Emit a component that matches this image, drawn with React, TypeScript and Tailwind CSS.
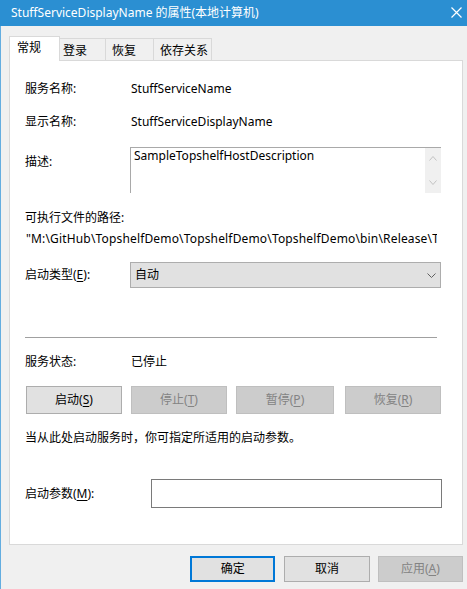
const Key = ({ k }: { k: string }) => <span className="underline underline-offset-2">{k}</span>;

function Chevron({ up = false, color = "#606060", w = 9, h = 5 }: { up?: boolean; color?: string; w?: number; h?: number }) {
  return (
    <svg width={w} height={h} viewBox={`0 0 ${w} ${h}`} fill="none">
      <path
        d={up ? `M0.5 ${h - 0.5} L${w / 2} 0.5 L${w - 0.5} ${h - 0.5}` : `M0.5 0.5 L${w / 2} ${h - 0.5} L${w - 0.5} 0.5`}
        stroke={color}
        strokeWidth="1"
      />
    </svg>
  );
}

function Btn({ children, disabled = false, className = "" }: { children: React.ReactNode; disabled?: boolean; className?: string }) {
  return (
    <div
      className={
        "flex items-center justify-center border leading-4 " +
        (disabled ? "bg-[#cccccc] border-[#bfbfbf] text-[#838383] " : "bg-[#e1e1e1] border-[#adadad] text-black ") +
        className
      }
    >
      {children}
    </div>
  );
}

export default function App() {
  return (
    <div className="w-[467px] h-[589px] bg-[#f0f0f0] flex flex-col overflow-hidden text-[12px] text-black font-['Noto_Sans','Noto_Sans_CJK_SC',sans-serif]">
      {/* title bar */}
      <div className="h-[26px] bg-[#2b8fd2] flex items-center pl-[11px] pr-[5px] text-white shrink-0">
        <span className="flex-1 leading-4">StuffServiceDisplayName 的属性(本地计算机)</span>
        <svg width="11" height="11" viewBox="0 0 11 11" className="mb-[2px]">
          <path d="M0.5 0.5 L10.5 10.5 M10.5 0.5 L0.5 10.5" stroke="#fff" strokeWidth="1.2" />
        </svg>
      </div>

      <div className="flex-1 flex flex-col border-l border-[#63ade0] pl-[8px] pr-[4px] pt-[10px]">
        {/* tabs */}
        <div className="flex items-end h-[24px]">
          <div className="relative z-10 -mb-px h-[25px] w-[51px] bg-white border-t border-l border-r border-[#d9d9d9] pl-[7px] pt-[3px] leading-4">
            常规
          </div>
          <div className="h-[22px] w-[46px] border-t border-r border-[#d9d9d9] pl-[3px] pt-[4px] leading-4">登录</div>
          <div className="h-[22px] w-[48px] border-t border-r border-[#d9d9d9] pl-[6px] pt-[4px] leading-4">恢复</div>
          <div className="h-[22px] w-[58px] border-t border-r border-[#d9d9d9] pl-[6px] pt-[4px] leading-4">依存关系</div>
        </div>

        {/* panel */}
        <div className="h-[485px] bg-white border border-[#d9d9d9] pl-[15px] flex flex-col leading-4">
          <div className="flex mt-[20px]">
            <div className="w-[106px]">服务名称:</div>
            <div>StuffServiceName</div>
          </div>
          <div className="flex mt-[17px]">
            <div className="w-[106px]">显示名称:</div>
            <div>StuffServiceDisplayName</div>
          </div>
          <div className="flex mt-[17px]">
            <div className="w-[105px] pt-[7px]">描述:</div>
            <div className="w-[311px] h-[46px] border-t border-l border-[#a9a9a9] flex">
              <div className="flex-1 pl-[3px]">SampleTopshelfHostDescription</div>
              <div className="w-[16px] bg-[#f0f0f0] flex flex-col items-center justify-between pt-[8px] pb-[8px]">
                <Chevron up color="#c2c2c2" w={8} h={5} />
                <Chevron color="#c2c2c2" w={8} h={5} />
              </div>
            </div>
          </div>
          <div className="mt-[17px]">可执行文件的路径:</div>
          <div className="mt-[5px] ml-[1px] w-[411px] overflow-hidden whitespace-nowrap tracking-[0.16px]">
            "M:\GitHub\TopshelfDemo\TopshelfDemo\TopshelfDemo\bin\Release\TopshelfDemo.exe"
          </div>
          <div className="flex items-center mt-[15px]">
            <div className="w-[105px]">
              启动类型(<Key k="E" />):
            </div>
            <div className="w-[311px] h-[26px] bg-[#e1e1e1] border border-[#adadad] flex items-center pl-[4px] pr-[4px]">
              <span className="flex-1">自动</span>
              <Chevron color="#606060" w={9} h={5} />
            </div>
          </div>
          <div className="mt-[49px] w-[412px] h-px bg-[#a0a0a0]" />
          <div className="flex mt-[16px]">
            <div className="w-[106px]">服务状态:</div>
            <div>已停止</div>
          </div>
          <div className="flex mt-[16px] h-[28px]">
            <Btn className="ml-[1px] w-[96px]">
              启动(<Key k="S" />)
            </Btn>
            <Btn disabled className="ml-[9px] w-[96px]">
              停止(<Key k="T" />)
            </Btn>
            <Btn disabled className="ml-[9px] w-[98px]">
              暂停(<Key k="P" />)
            </Btn>
            <Btn disabled className="ml-[11px] w-[96px]">
              恢复(<Key k="R" />)
            </Btn>
          </div>
          <div className="mt-[16px]">当从此处启动服务时，你可指定所适用的启动参数。</div>
          <div className="flex items-center mt-[33px]">
            <div className="w-[126px]">
              启动参数(<Key k="M" />):
            </div>
            <div className="w-[291px] h-[29px] border border-[#7a7a7a] bg-white" />
          </div>
        </div>

        {/* dialog buttons */}
        <div className="flex mt-[11px] h-[26px] leading-4">
          <div className="ml-[181px] w-[86px] flex items-center justify-center bg-[#e1e1e1] border-2 border-[#0078d7]">确定</div>
          <Btn className="ml-[9px] w-[86px]">取消</Btn>
          <Btn disabled className="ml-[8px] w-[86px]">
            应用(<Key k="A" />)
          </Btn>
        </div>
      </div>
    </div>
  );
}
